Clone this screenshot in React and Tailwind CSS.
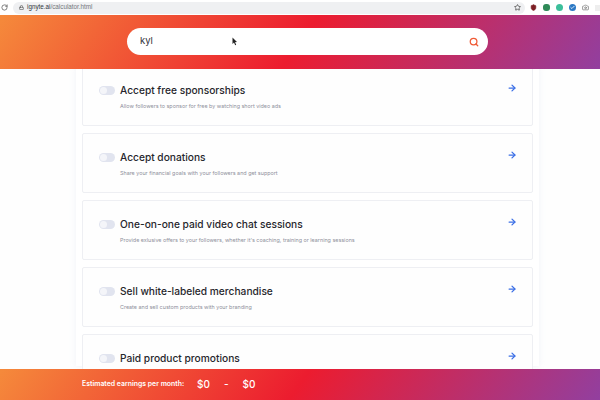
import React from 'react';
import { RotateCw, Lock, Star, Search, ArrowRight, Camera, Shield, Check } from 'lucide-react';

const cards = [
  { title: 'Accept free sponsorships', text: 'Allow followers to sponsor for free by watching short video ads' },
  { title: 'Accept donations', text: 'Share your financial goals with your followers and get support' },
  { title: 'One-on-one paid video chat sessions', text: "Provide exlusive offers to your followers, whether it's coaching, training or learning sessions" },
  { title: 'Sell white-labeled merchandise', text: 'Create and sell custom products with your branding' },
  { title: 'Paid product promotions', text: '' },
];

function Card({ title, text }) {
  return (
    <div className="h-[60px] shrink-0 bg-[#fefefe] border border-[#eeeff3] rounded-[2px] pl-[16px] pr-[15px] pt-[16px] flex justify-between items-start">
      <div>
        <div className="flex items-center gap-[5px] h-[16px]">
          <div className="w-[16px] h-[9px] mb-[2px] rounded-full bg-[#e1e4ef] flex items-center pl-[1px]">
            <div className="w-[7px] h-[7px] rounded-full bg-[#f4f5f9]" />
          </div>
          <span className="text-[10.2px] font-medium text-[#26262c] whitespace-nowrap">{title}</span>
        </div>
        <p className="text-[5.4px] text-[#8f909c] ml-[21px] mt-[3px] leading-[8px] whitespace-nowrap">{text}</p>
      </div>
      <ArrowRight className="w-[10px] h-[10px] text-[#3b6fe6]" strokeWidth={3} />
    </div>
  );
}

export default function App() {
  return (
    <div className="w-[600px] h-[400px] overflow-hidden flex flex-col bg-white font-['Inter','Liberation_Sans',sans-serif]">
      {/* browser bar */}
      <div className="h-[15px] shrink-0 bg-white flex items-center pl-[1px]">
        <RotateCw className="w-[7px] h-[7px] text-[#555]" strokeWidth={2.5} />
        <div className="ml-[5px] w-[512px] h-[12px] rounded-full bg-[#eff0f2] flex items-center pl-[6px] pr-[4px]">
          <Lock className="w-[5px] h-[5px] text-[#555]" strokeWidth={3} />
          <span className="ml-[3px] text-[6.3px] leading-none text-[#30343a] font-['Liberation_Sans',sans-serif]">ignyte.ai<span className="text-[#74777c]">/calculator.html</span></span>
          <Star className="w-[7px] h-[7px] ml-auto text-[#444]" strokeWidth={2.5} />
        </div>
        <div className="flex items-center gap-[6px] ml-[5px]">
          <Shield className="w-[7px] h-[7px] text-[#7c1f24]" fill="#7c1f24" />
          <div className="w-[7px] h-[7px] rounded-[3px] bg-[#2f8a58]" />
          <div className="w-[7px] h-[7px] rounded-full bg-[#3cbf9b]" />
          <div className="w-[7px] h-[7px] rounded-full bg-[#2b78c4] flex items-center justify-center">
            <Check className="w-[5px] h-[5px] text-white" strokeWidth={4} />
          </div>
          <Camera className="w-[7px] h-[7px] text-[#777]" strokeWidth={2.5} />
          <div className="w-[5px] h-[6px] bg-[#eeeeee]" />
        </div>
      </div>

      {/* header */}
      <header className="h-[54px] shrink-0 bg-[linear-gradient(125deg,#f58a3b_0%,#ec1c2f_50%,#923f9f_100%)] flex items-start pt-[13px] pl-[127px]">
        <div className="w-[361px] h-[27px] rounded-full bg-white flex items-center pl-[13px] pr-[9px] relative">
          <span className="text-[9.5px] text-[#30303a]">kyl</span>
          <svg className="absolute left-[105px] top-[9px]" width="6" height="9" viewBox="0 0 6 9">
            <path d="M0.5 0.5 L0.5 7 L2 5.6 L3.2 8.2 L4.2 7.7 L3 5.2 L5 5.1 Z" fill="#222" />
          </svg>
          <Search className="w-[10px] h-[10px] ml-auto text-[#ef5a35]" strokeWidth={3} />
        </div>
      </header>

      {/* content */}
      <main className="flex-1 min-h-0 overflow-hidden bg-[#fefefe] pl-[76px]">
        <div className="w-[463px] pl-[6px] pr-[6px] h-full bg-white shadow-[0_0_6px_rgba(225,228,240,0.45)] flex flex-col gap-[7px] -mt-[3px]">
          {cards.map((c) => (
            <Card key={c.title} title={c.title} text={c.text} />
          ))}
        </div>
      </main>

      {/* earnings bar */}
      <footer className="h-[31px] shrink-0 bg-[linear-gradient(125deg,#f58a3b_0%,#ec1c2f_50%,#923f9f_100%)] flex items-center pl-[82px] text-white">
        <span className="text-[6.9px] font-semibold w-[115px] whitespace-nowrap">Estimated earnings per month:</span>
        <span className="text-[10px] font-medium">$0</span>
        <span className="text-[10px] font-medium ml-[14px]">-</span>
        <span className="text-[10px] font-medium ml-[14px]">$0</span>
      </footer>
    </div>
  );
}
